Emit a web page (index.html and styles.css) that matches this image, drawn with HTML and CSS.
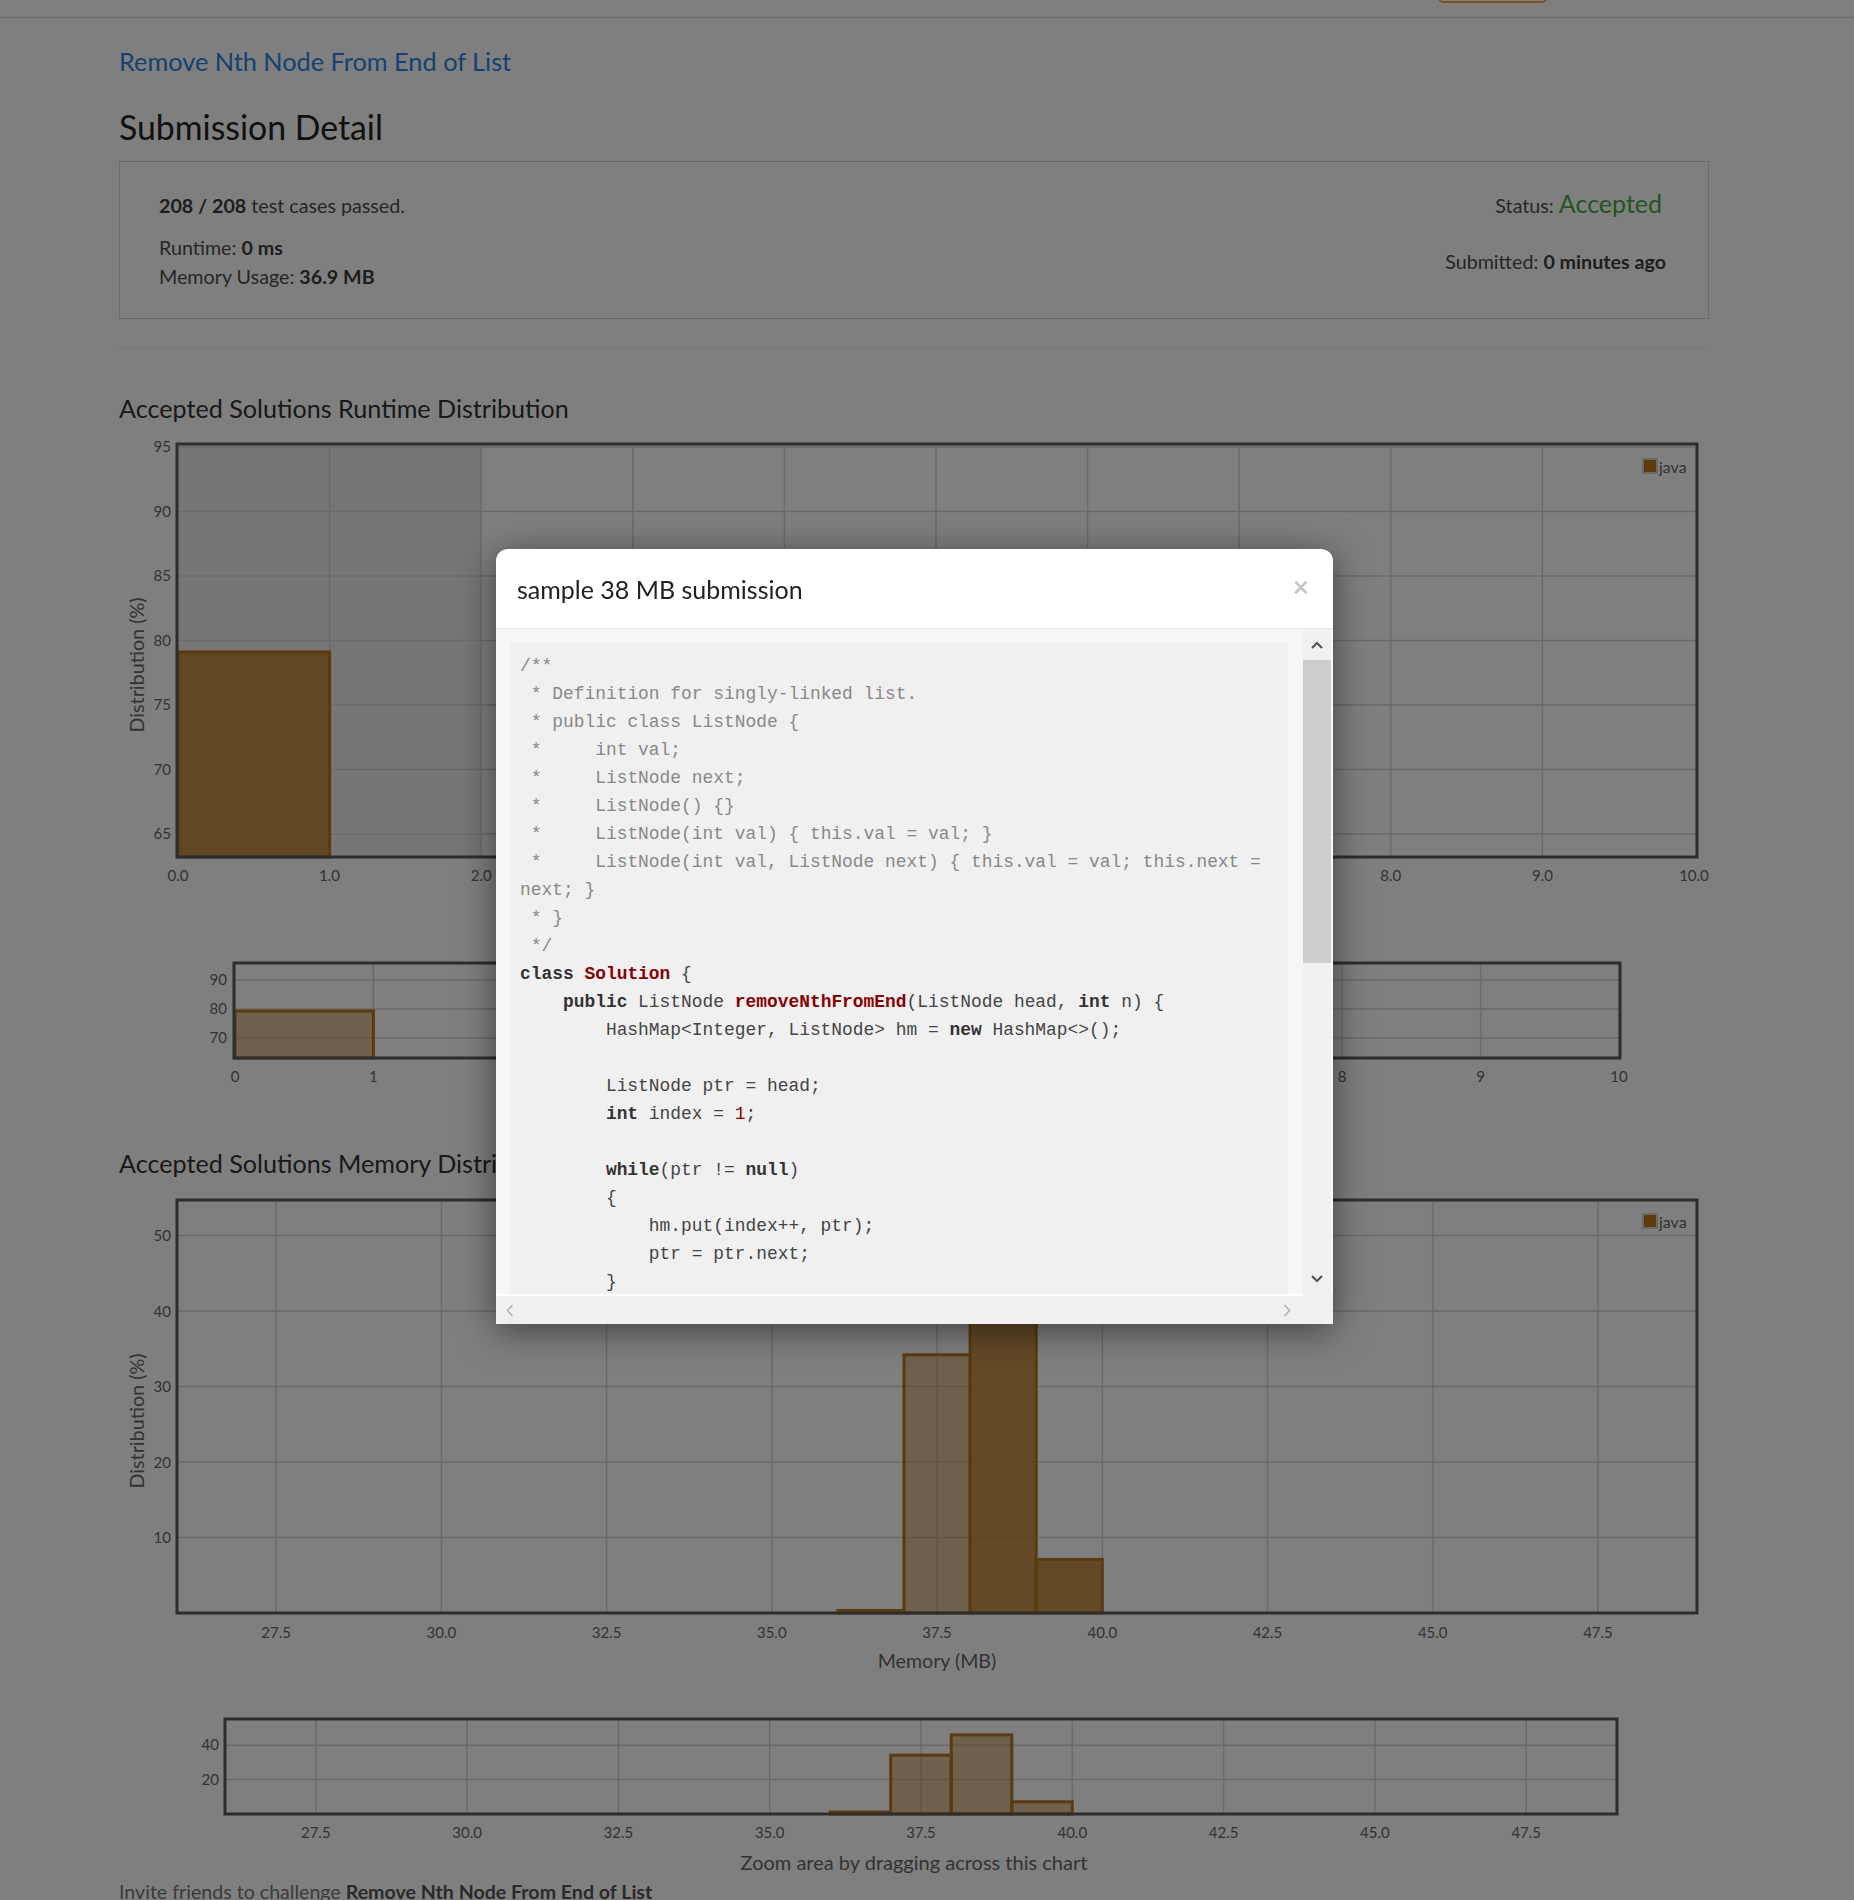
FILE: index.html
```html
<!DOCTYPE html>
<html lang="en">
<head>
<meta charset="utf-8">
<title>Submission Detail - Remove Nth Node From End of List</title>
<link rel="stylesheet" href="styles.css">
</head>
<body>
<header class="navbar">
  <span class="nav-btn"></span>
</header>

<main class="container">
  <div class="link-row"><a class="problem-link" href="#">Remove Nth Node From End of List</a></div>
  <h3 class="page-title">Submission Detail</h3>

  <section class="panel">
    <div class="panel-left">
      <div class="cases"><b>208 / 208</b> test cases passed.</div>
      <div class="stats">
        <div class="stat">Runtime: <b>0 ms</b></div>
        <div class="stat">Memory Usage: <b>36.9 MB</b></div>
      </div>
    </div>
    <div class="panel-right">
      <div class="status">Status: <span class="accepted">Accepted</span></div>
      <div class="submitted">Submitted: <b>0 minutes ago</b></div>
    </div>
  </section>

  <hr class="divider">

  <h4 class="chart-title">Accepted Solutions Runtime Distribution</h4>
  <svg class="chart chart-runtime" width="1590" height="480" viewBox="0 0 1590 480">
    <rect class="band" x="59" y="14" width="303.2" height="411"/>
    <path class="grid" d="M210.6 14V425M362.2 14V425M513.8 14V425M665.4 14V425M817 14V425M968.6 14V425M1120.2 14V425M1271.8 14V425M1423.4 14V425M59 16H1577M59 80.5H1577M59 145H1577M59 209.5H1577M59 274H1577M59 338.5H1577M59 403H1577"/>
    <rect class="bar bar-dark" x="59" y="221" width="151.6" height="205"/>
    <rect class="frame" x="58" y="13" width="1520" height="413"/>
    <g class="labels" text-anchor="end">
      <text x="52" y="21">95</text>
      <text x="52" y="85.5">90</text>
      <text x="52" y="150">85</text>
      <text x="52" y="214.5">80</text>
      <text x="52" y="279">75</text>
      <text x="52" y="343.5">70</text>
      <text x="52" y="408">65</text>
    </g>
    <g class="labels" text-anchor="middle">
      <text x="59" y="450">0.0</text>
      <text x="210.6" y="450">1.0</text>
      <text x="362.2" y="450">2.0</text>
      <text x="513.8" y="450">3.0</text>
      <text x="665.4" y="450">4.0</text>
      <text x="817" y="450">5.0</text>
      <text x="968.6" y="450">6.0</text>
      <text x="1120.2" y="450">7.0</text>
      <text x="1271.8" y="450">8.0</text>
      <text x="1423.4" y="450">9.0</text>
      <text x="1575" y="450">10.0</text>
    </g>
    <text class="axis-title" transform="translate(18 234) rotate(-90)" text-anchor="middle" dy="0.35em">Distribution (%)</text>
    <text class="axis-title" x="818" y="478" text-anchor="middle">Runtime (ms)</text>
    <rect class="legend-box" x="1524" y="28" width="14" height="14"/>
    <text class="legend-text" x="1540" y="42">java</text>
  </svg>

  <svg class="chart chart-nav" width="1590" height="220" viewBox="0 0 1590 220">
    <path class="grid" d="M254.4 53V146M392.8 53V146M531.2 53V146M669.6 53V146M808 53V146M946.4 53V146M1084.8 53V146M1223.2 53V146M1361.6 53V146M116 69H1500M116 98H1500M116 127H1500"/>
    <rect class="bar bar-light" x="116" y="100" width="138.4" height="47"/>
    <rect class="frame" x="115" y="52" width="1386" height="95"/>
    <g class="labels" text-anchor="end">
      <text x="108" y="74">90</text>
      <text x="108" y="103">80</text>
      <text x="108" y="132">70</text>
    </g>
    <g class="labels" text-anchor="middle">
      <text x="116" y="171">0</text>
      <text x="254.4" y="171">1</text>
      <text x="392.8" y="171">2</text>
      <text x="531.2" y="171">3</text>
      <text x="669.6" y="171">4</text>
      <text x="808" y="171">5</text>
      <text x="946.4" y="171">6</text>
      <text x="1084.8" y="171">7</text>
      <text x="1223.2" y="171">8</text>
      <text x="1361.6" y="171">9</text>
      <text x="1500" y="171">10</text>
    </g>
  </svg>

  <h4 class="chart-title chart-title-mem">Accepted Solutions Memory Distribution</h4>
  <svg class="chart chart-memory" width="1590" height="500" viewBox="0 0 1590 500">
    <path class="grid" d="M157.1 16V426M322.4 16V426M487.6 16V426M652.8 16V426M818 16V426M983.3 16V426M1148.5 16V426M1313.7 16V426M1479 16V426M59 49.5H1577M59 125H1577M59 200.5H1577M59 276H1577M59 351.5H1577"/>
    <rect class="bar bar-dark" x="718.9" y="424.5" width="66.1" height="2.5"/>
    <rect class="bar bar-light" x="785" y="168.8" width="66.1" height="258.2"/>
    <rect class="bar bar-dark" x="851.1" y="79.7" width="66.1" height="347.3"/>
    <rect class="bar bar-dark" x="917.2" y="373.4" width="66.1" height="53.6"/>
    <rect class="frame" x="58" y="14" width="1520" height="413"/>
    <g class="labels" text-anchor="end">
      <text x="52" y="55">50</text>
      <text x="52" y="130.5">40</text>
      <text x="52" y="206">30</text>
      <text x="52" y="281.5">20</text>
      <text x="52" y="357">10</text>
    </g>
    <g class="labels" text-anchor="middle">
      <text x="157.1" y="452">27.5</text>
      <text x="322.4" y="452">30.0</text>
      <text x="487.6" y="452">32.5</text>
      <text x="652.8" y="452">35.0</text>
      <text x="818" y="452">37.5</text>
      <text x="983.3" y="452">40.0</text>
      <text x="1148.5" y="452">42.5</text>
      <text x="1313.7" y="452">45.0</text>
      <text x="1479" y="452">47.5</text>
    </g>
    <text class="axis-title" transform="translate(18 235) rotate(-90)" text-anchor="middle" dy="0.35em">Distribution (%)</text>
    <text class="axis-title axis-title-x" x="818" y="482" text-anchor="middle">Memory (MB)</text>
    <rect class="legend-box" x="1524" y="28" width="14" height="14"/>
    <text class="legend-text" x="1540" y="42">java</text>
  </svg>

  <svg class="chart chart-nav-mem" width="1590" height="164" viewBox="0 0 1590 164">
    <path class="grid" d="M196.8 34V127M348.1 34V127M499.4 34V127M650.7 34V127M802 34V127M953.3 34V127M1104.6 34V127M1255.9 34V127M1407.2 34V127M107 59.2H1497M107 93.6H1497"/>
    <rect class="bar bar-light" x="711.2" y="126" width="60.5" height="2"/>
    <rect class="bar bar-light" x="771.7" y="69.2" width="60.5" height="58.8"/>
    <rect class="bar bar-light" x="832.2" y="48.9" width="60.6" height="79.1"/>
    <rect class="bar bar-light" x="892.8" y="115.8" width="60.5" height="12.2"/>
    <rect class="frame" x="106" y="33" width="1392" height="95"/>
    <g class="labels" text-anchor="end">
      <text x="100" y="64">40</text>
      <text x="100" y="98.5">20</text>
    </g>
    <g class="labels" text-anchor="middle">
      <text x="196.8" y="152">27.5</text>
      <text x="348.1" y="152">30.0</text>
      <text x="499.4" y="152">32.5</text>
      <text x="650.7" y="152">35.0</text>
      <text x="802" y="152">37.5</text>
      <text x="953.3" y="152">40.0</text>
      <text x="1104.6" y="152">42.5</text>
      <text x="1255.9" y="152">45.0</text>
      <text x="1407.2" y="152">47.5</text>
    </g>
  </svg>

  <div class="zoom-hint">Zoom area by dragging across this chart</div>
  <div class="invite">Invite friends to challenge <b>Remove Nth Node From End of List</b></div>
</main>

<div class="backdrop"></div>

<div class="modal" role="dialog" aria-label="sample 38 MB submission">
  <div class="modal-header">
    <h4 class="modal-title">sample 38 MB submission</h4>
    <span class="close">×</span>
  </div>
  <div class="modal-body">
    <div class="code-view">
<pre class="code"><span class="c">/**
 * Definition for singly-linked list.
 * public class ListNode {
 *     int val;
 *     ListNode next;
 *     ListNode() {}
 *     ListNode(int val) { this.val = val; }
 *     ListNode(int val, ListNode next) { this.val = val; this.next = next; }
 * }
 */</span>
<span class="k">class</span> <span class="t">Solution</span> {
    <span class="k">public</span> ListNode <span class="t">removeNthFromEnd</span>(ListNode head, <span class="k">int</span> n) {
        HashMap&lt;Integer, ListNode&gt; hm = <span class="k">new</span> HashMap&lt;&gt;();

        ListNode ptr = head;
        <span class="k">int</span> index = <span class="n">1</span>;

        <span class="k">while</span>(ptr != <span class="k">null</span>)
        {
            hm.put(index++, ptr);
            ptr = ptr.next;
        }

        <span class="k">int</span> size = index - <span class="n">1</span>;
        <span class="k">if</span>(size == n) <span class="k">return</span> head.next;

        ListNode prev = hm.get(size - n);
        prev.next = prev.next.next;
        <span class="k">return</span> head;
    }
}</pre>
    </div>
    <div class="vscroll">
      <div class="sb-btn sb-up">
        <svg width="12" height="8" viewBox="0 0 12 8"><path d="M1 7L6 2L11 7" fill="none" stroke="#505050" stroke-width="2"/></svg>
      </div>
      <div class="sb-thumb"></div>
      <div class="sb-track"></div>
      <div class="sb-btn sb-down">
        <svg width="12" height="8" viewBox="0 0 12 8"><path d="M1 1L6 6L11 1" fill="none" stroke="#505050" stroke-width="2"/></svg>
      </div>
    </div>
    <div class="hscroll">
      <svg width="8" height="13" viewBox="0 0 8 13"><path d="M6.5 1L1.5 6.5L6.5 12" fill="none" stroke="#b4b4b4" stroke-width="1.6"/></svg>
      <svg width="8" height="13" viewBox="0 0 8 13"><path d="M1.5 1L6.5 6.5L1.5 12" fill="none" stroke="#b4b4b4" stroke-width="1.6"/></svg>
    </div>
    <div class="sb-corner"></div>
  </div>
</div>
</body>
</html>
```

FILE: styles.css
```css
* {
  box-sizing: border-box;
}

html {
  overflow: hidden;
}

body {
  margin: 0;
  background: #fff;
  font-family: Lato, "Open Sans", sans-serif;
  color: #4d4d4d;
}

/* ---------- top bar ---------- */
.navbar {
  height: 18px;
  border-bottom: 1px solid #d8d8d8;
  display: flex;
}

.nav-btn {
  margin-left: 1438px;
  margin-top: -27px;
  width: 109px;
  height: 30px;
  border: 2px solid #eda13a;
  border-radius: 5px;
}

/* ---------- page ---------- */
.container {
  width: 1590px;
  margin-left: 119px;
}

.link-row {
  margin-top: 25px;
  line-height: 36px;
}

.problem-link {
  font-size: 25.3px;
  color: #2a84e4;
  text-decoration: none;
}

.page-title {
  margin: 24px 0 0;
  font-size: 33.8px;
  line-height: 40px;
  font-weight: 400;
  color: #222;
}

.panel {
  margin-top: 14px;
  height: 158px;
  border: 1px solid #d4d4d4;
  display: flex;
  justify-content: space-between;
  font-size: 19.7px;
}

.panel b {
  font-weight: 700;
  color: #3c3c3c;
}

.panel-left {
  padding: 31px 0 0 39px;
}

.cases {
  line-height: 26px;
}

.stats {
  margin-top: 14px;
}

.stat {
  line-height: 29px;
}

.panel-right {
  padding: 28px 42px 0 0;
  display: flex;
  flex-direction: column;
  align-items: flex-end;
}

.status {
  line-height: 26px;
  margin-right: 4px;
}

.accepted {
  font-size: 25px;
  line-height: 26px;
  color: #48a848;
}

.submitted {
  margin-top: 30px;
  line-height: 26px;
}

.divider {
  margin: 29px 0 0;
  border: 0;
  border-top: 1px solid #eee;
  height: 0;
}

.chart-title {
  margin: 43px 0 0;
  font-size: 25.15px;
  line-height: 32px;
  font-weight: 400;
  color: #333;
}

.chart-title-mem {
  margin-top: 16px;
}

.chart {
  display: block;
}

.chart-runtime {
  margin-top: 7px;
}

.chart-memory {
  margin-top: 7px;
}

/* chart parts */
.band {
  fill: #ececec;
}

.grid {
  fill: none;
  stroke: #d4d4d4;
  stroke-width: 1.5;
}

.frame {
  fill: none;
  stroke: #5a5a5a;
  stroke-width: 3;
}

.bar {
  stroke: #b6741c;
  stroke-width: 3;
}

.bar-dark {
  fill: rgba(184, 120, 32, 0.8);
}

.bar-light {
  fill: rgba(184, 120, 32, 0.45);
}

.chart text {
  font-family: Lato, "Open Sans", sans-serif;
  font-size: 15px;
  fill: #666;
}

.chart .axis-title {
  font-size: 19.8px;
}

.chart .axis-title-x {
  font-size: 19.6px;
}

.legend-box {
  fill: #c07814;
  stroke: #d4d4d4;
  stroke-width: 2;
}

.chart .legend-text {
  font-size: 16px;
}

.zoom-hint {
  text-align: center;
  font-size: 20px;
  line-height: 24px;
  color: #666;
}

.invite {
  margin-top: 6px;
  font-size: 19.6px;
  line-height: 24px;
  color: #777;
}

.invite b {
  color: #555;
}

/* ---------- modal ---------- */
.backdrop {
  position: fixed;
  inset: 0;
  background: rgba(0, 0, 0, 0.5);
}

.modal {
  position: fixed;
  left: 496px;
  top: 549px;
  width: 837px;
  height: 775px;
  background: #fff;
  border-radius: 12px 12px 0 0;
  box-shadow: 0 6px 36px rgba(0, 0, 0, 0.5);
  overflow: hidden;
  display: flex;
  flex-direction: column;
}

.modal-header {
  height: 80px;
  flex: none;
  border-bottom: 1px solid #e5e5e5;
  display: flex;
  align-items: center;
  justify-content: space-between;
  padding: 0 24px 0 21px;
}

.modal-title {
  margin: 0;
  font-size: 25px;
  line-height: 30px;
  font-weight: 400;
  color: #222;
}

.close {
  margin-top: -5px;
  font-size: 28px;
  line-height: 1;
  font-weight: 700;
  color: #c6c6c6;
}

.modal-body {
  display: grid;
  grid-template-columns: 807px 30px;
  grid-template-rows: 665px 30px;
}

.code-view {
  padding: 14px 15px 0 14px;
  background: #f6f6f6;
  overflow: hidden;
}

.code {
  margin: 0;
  padding: 9px 10px;
  background: #f0f0f0;
  font-family: "Liberation Mono", monospace;
  font-size: 17.9px;
  line-height: 28px;
  color: #444;
  white-space: pre-wrap;
}

.code .c {
  color: #888;
}

.code .k {
  font-weight: 700;
  color: #333;
}

.code .t {
  font-weight: 700;
  color: #880000;
}

.code .n {
  color: #880000;
}

.vscroll {
  background: #f0f0f0;
  border-right: 2px solid #fafafa;
  display: flex;
  flex-direction: column;
}

.sb-btn {
  flex: none;
  display: flex;
  align-items: center;
  justify-content: center;
}

.sb-up {
  height: 31px;
}

.sb-down {
  height: 30px;
}

.sb-thumb {
  height: 303px;
  flex: none;
  background: #cdcdcd;
}

.sb-track {
  flex: 1;
}

.hscroll {
  background: #f0f0f0;
  border-top: 2px solid #fff;
  display: flex;
  align-items: center;
  justify-content: space-between;
  padding: 0 12px 0 10px;
}

.sb-corner {
  background: #f0f0f0;
}
```
